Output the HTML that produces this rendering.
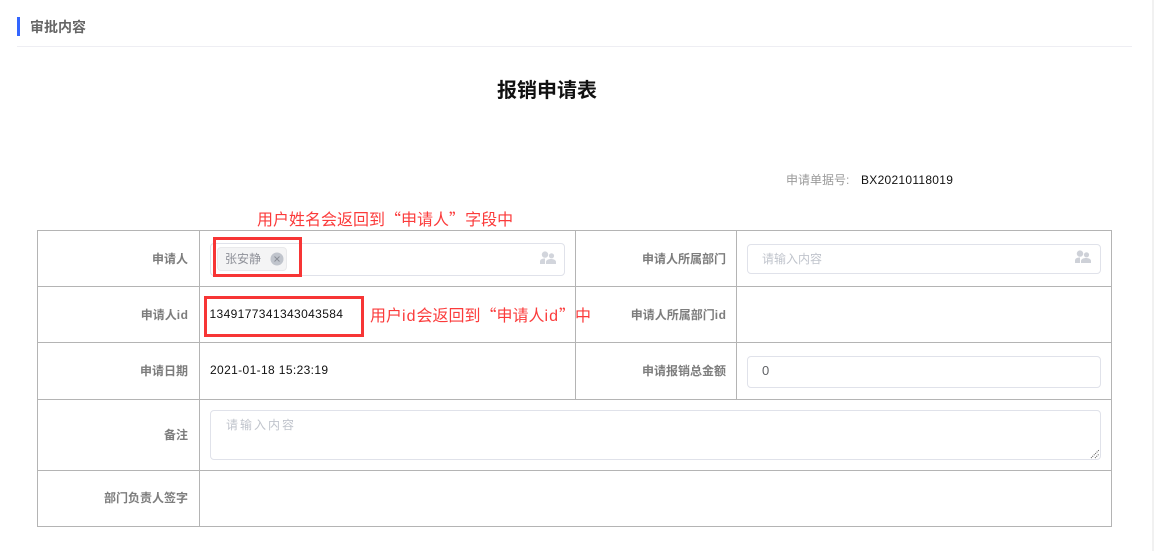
<!DOCTYPE html>
<html lang="zh">
<head>
<meta charset="utf-8">
<title>审批内容</title>
<style>
html,body{margin:0;padding:0;background:#fff;}
body{position:relative;width:1154px;height:551px;overflow:hidden;font-family:"Liberation Sans","Noto Sans CJK SC",sans-serif;}
.a{position:absolute;white-space:nowrap;}
.l{position:absolute;background:#b4b4b4;}
.lb{position:absolute;font-size:12px;font-weight:700;color:#7d7d7d;line-height:16px;text-align:right;white-space:nowrap;}
.lb i{font-style:normal;letter-spacing:.6px;margin-right:-.6px;}
.box{position:absolute;box-sizing:border-box;border:1px solid #e0e2ea;border-radius:4px;background:#fff;}
.red{position:absolute;font-size:16px;line-height:22px;color:#fb3b3b;white-space:nowrap;}
.red b{font-weight:400;font-family:"Noto Sans CJK SC",sans-serif;}
.red i{font-style:normal;letter-spacing:1px;}
.rb{position:absolute;box-sizing:border-box;border:3px solid #f73535;}
</style>
</head>
<body>
<div class="a" style="left:17px;top:17px;width:3px;height:19px;background:#3366ff"></div>
<div class="a" style="left:30px;top:18px;font-size:14px;font-weight:700;color:#666;line-height:18px">审批内容</div>
<div class="a" style="left:17px;top:46px;width:1115px;height:1px;background:#eeeef3"></div>
<div class="a" style="left:1152px;top:0;width:2px;height:551px;background:#f1f1f1"></div>

<div class="a" style="left:497px;top:77px;font-size:20px;font-weight:700;color:#111;line-height:28px">报销申请表</div>
<div class="a" style="left:786px;top:172px;font-size:12px;color:#9a9a9a;line-height:16px">申请单据号:</div>
<div class="a" style="left:861px;top:172px;font-size:12px;color:#111;line-height:16px;letter-spacing:.28px">BX20210118019</div>

<div class="red" style="left:257px;top:207px">用户姓名会返回到<b>“</b>申请人<b>”</b>字段中</div>

<!-- table lines -->
<div class="l" style="left:37px;top:230px;width:1075px;height:1px"></div>
<div class="l" style="left:37px;top:286px;width:1075px;height:1px"></div>
<div class="l" style="left:37px;top:342px;width:1075px;height:1px"></div>
<div class="l" style="left:37px;top:399px;width:1075px;height:1px"></div>
<div class="l" style="left:37px;top:470px;width:1075px;height:1px"></div>
<div class="l" style="left:37px;top:526px;width:1075px;height:1px"></div>
<div class="l" style="left:37px;top:230px;width:1px;height:297px"></div>
<div class="l" style="left:199px;top:230px;width:1px;height:297px"></div>
<div class="l" style="left:575px;top:230px;width:1px;height:170px"></div>
<div class="l" style="left:736px;top:230px;width:1px;height:170px"></div>
<div class="l" style="left:1111px;top:230px;width:1px;height:297px"></div>

<!-- labels -->
<div class="lb" style="right:966px;top:251px">申请人</div>
<div class="lb" style="right:966px;top:307px">申请人<i>id</i></div>
<div class="lb" style="right:966px;top:363px">申请日期</div>
<div class="lb" style="right:966px;top:427px">备注</div>
<div class="lb" style="right:966px;top:490px">部门负责人签字</div>
<div class="lb" style="right:428px;top:251px">申请人所属部门</div>
<div class="lb" style="right:428px;top:307px">申请人所属部门<i>id</i></div>
<div class="lb" style="right:428px;top:363px">申请报销总金额</div>

<!-- applicant input -->
<div class="box" style="left:210px;top:243px;width:355px;height:33px"></div>
<div class="box" style="left:217px;top:247px;width:70px;height:24px;background:#f4f4f5;border-color:#e9e9eb"></div>
<div class="a" style="left:225px;top:251px;font-size:12px;color:#8f9199;line-height:16px">张安静</div>
<svg class="a" style="left:270px;top:252px" width="14" height="14" viewBox="0 0 14 14"><circle cx="7" cy="7" r="6.5" fill="#c0c4cc"/><path d="M4.500 4.500l5 5M9.500 4.500l-5 5" stroke="#8b8f98" stroke-width="1" fill="none"/></svg>
<svg class="a" style="left:540px;top:251px" width="16" height="14" viewBox="0 0 16 14"><circle cx="5" cy="3.600" r="3.200" fill="#d2d5dc"/><circle cx="11.500" cy="4.800" r="2.600" fill="#d2d5dc"/><path d="M0 13V10.500C0 8.500 2 7.500 5 7.500V13Z" fill="#d2d5dc"/><path d="M6 13V11C6 9 8.500 8 11 8S16 9 16 11V13Z" fill="#d2d5dc"/></svg>

<!-- department input -->
<div class="box" style="left:747px;top:244px;width:354px;height:30px"></div>
<div class="a" style="left:762px;top:251px;font-size:12px;color:#c0c4cc;line-height:16px">请输入内容</div>
<svg class="a" style="left:1075px;top:250px" width="16" height="14" viewBox="0 0 16 14"><circle cx="5" cy="3.600" r="3.200" fill="#ced1d8"/><circle cx="11.500" cy="4.800" r="2.600" fill="#ced1d8"/><path d="M0 13V10.500C0 8.500 2 7.500 5 7.500V13Z" fill="#ced1d8"/><path d="M6 13V11C6 9 8.500 8 11 8S16 9 16 11V13Z" fill="#ced1d8"/></svg>

<!-- id -->
<div class="a" style="left:209.500px;top:306px;font-size:12px;color:#111;line-height:16px;letter-spacing:.37px">1349177341343043584</div>
<div class="red" style="left:370px;top:303px">用户<i>id</i>会返回到<b>“</b>申请人<i>id</i><b>”</b>中</div>

<!-- date -->
<div class="a" style="left:210px;top:362px;font-size:12px;color:#111;line-height:16px;letter-spacing:.37px">2021-01-18 15:23:19</div>

<!-- amount -->
<div class="box" style="left:747px;top:356px;width:354px;height:32px"></div>
<div class="a" style="left:762px;top:363px;font-size:13px;color:#606266;line-height:16px">0</div>

<!-- textarea -->
<div class="box" style="left:210px;top:410px;width:891px;height:50px"></div>
<div class="a" style="left:226px;top:417px;font-size:12px;color:#c0c4cc;line-height:16px;letter-spacing:2px">请输入内容</div>
<svg class="a" style="left:1090px;top:449px" width="10" height="10" viewBox="0 0 10 10"><path d="M1 9L9 1M5 9L9 5" stroke="#555" stroke-width="1" stroke-dasharray="1 1" fill="none"/></svg>

<!-- red highlight boxes -->
<div class="rb" style="left:213px;top:237px;width:89px;height:40px"></div>
<div class="rb" style="left:204px;top:296px;width:160px;height:41px"></div>
</body>
</html>
